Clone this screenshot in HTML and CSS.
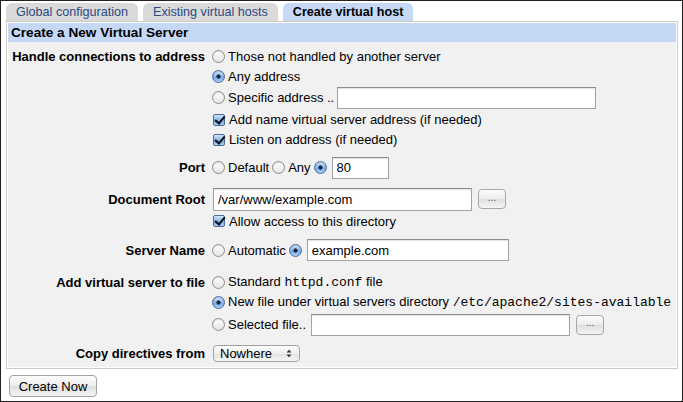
FILE: index.html
```html
<!DOCTYPE html>
<html>
<head>
<meta charset="utf-8">
<link rel="stylesheet" href="styles.css">
</head>
<body>
<div class="frame">
  <div class="tabs">
    <div class="tab">Global configuration</div>
    <div class="tab">Existing virtual hosts</div>
    <div class="tab active">Create virtual host</div>
  </div>
  <div class="panel">
    <div class="panel-head">Create a New Virtual Server</div>
    <div class="panel-body">
      <div class="group g-handle">
        <div class="label h19">Handle connections to address</div>
        <div class="fields">
          <div class="line h19"><input type="radio" class="rd" name="addr"><span>Those not handled by another server</span></div>
          <div class="line h20"><input type="radio" class="rd" name="addr" checked><span>Any address</span></div>
          <div class="line h23"><input type="radio" class="rd" name="addr"><span>Specific address ..</span><input type="text" class="txt w-spec"></div>
          <div class="line h21"><input type="checkbox" class="cb" checked><span>Add name virtual server address (if needed)</span></div>
          <div class="line h19"><input type="checkbox" class="cb" checked><span>Listen on address (if needed)</span></div>
        </div>
      </div>
      <div class="group g-port">
        <div class="label h23">Port</div>
        <div class="fields">
          <div class="line h23"><input type="radio" class="rd" name="port"><span>Default</span><input type="radio" class="rd" name="port"><span>Any</span><input type="radio" class="rd" name="port" checked><input type="text" class="txt w-port" value="80"></div>
        </div>
      </div>
      <div class="group g-root">
        <div class="label h24">Document Root</div>
        <div class="fields">
          <div class="line h24"><input type="text" class="txt w-root first" value="/var/www/example.com"><button class="dots">...</button></div>
          <div class="line h20"><input type="checkbox" class="cb" checked><span>Allow access to this directory</span></div>
        </div>
      </div>
      <div class="group g-name">
        <div class="label h22">Server Name</div>
        <div class="fields">
          <div class="line h22"><input type="radio" class="rd" name="sn"><span>Automatic</span><input type="radio" class="rd" name="sn" checked><input type="text" class="txt w-name" value="example.com"></div>
        </div>
      </div>
      <div class="group g-file">
        <div class="label h20">Add virtual server to file</div>
        <div class="fields">
          <div class="line h20"><input type="radio" class="rd" name="f"><span>Standard <code>httpd.conf</code> file</span></div>
          <div class="line h20"><input type="radio" class="rd" name="f" checked><span>New file under virtual servers directory <code>/etc/apache2/sites-available</code></span></div>
          <div class="line h25"><input type="radio" class="rd" name="f"><span>Selected file..</span><input type="text" class="txt w-sel"><button class="dots">...</button></div>
        </div>
      </div>
      <div class="group g-copy">
        <div class="label h20">Copy directives from</div>
        <div class="fields">
          <div class="line h20">
            <div class="select"><span>Nowhere</span>
              <svg class="arr" width="6" height="9" viewBox="0 0 6 9"><path d="M0.5 3.5 L3 0.8 L5.5 3.5 Z M0.5 5.5 L3 8.2 L5.5 5.5 Z" fill="#333"/></svg>
            </div>
          </div>
        </div>
      </div>
    </div>
  </div>
  <div class="actions"><button class="btn">Create Now</button></div>
</div>
</body>
</html>
```

FILE: styles.css
```css
* { box-sizing: border-box; }
html, body { margin: 0; padding: 0; background: #fff; }
body { font-family: "Liberation Sans", Arial, sans-serif; font-size: 13px; color: #000; }

.frame {
  width: 683px;
  height: 402px;
  border: 1px solid #231f20;
  background: #fff;
  overflow: hidden;
}

.tabs {
  display: flex;
  gap: 5px;
  padding: 2px 0 0 5px;
  height: 20px;
}
.tab {
  height: 18px;
  padding: 0 10px 0 10px;
  line-height: 18px;
  font-size: 12.6px;
  color: #2b4a82;
  background: #dadada;
  border-radius: 6px 6px 0 0;
  white-space: nowrap;
}
.tab.active {
  background: #c5d9f7;
  color: #000;
  font-weight: bold;
  padding: 0 10px 0 10px;
}

.panel {
  margin: 0 4px 0 5px;
  border: 1px solid #cfcbc4;
  padding: 1px;
  background: #fff;
}
.panel-head {
  height: 19px;
  line-height: 20px;
  background: #c5d9f7;
  font-weight: bold;
  font-size: 13.6px;
  padding-left: 3px;
}
.panel-body {
  background: #f1f1f1;
  padding: 5px 0 4px 0;
}

.group { display: flex; }
.g-port { margin-top: 7px; }
.g-root { margin-top: 8px; }
.g-name { margin-top: 8px; }
.g-file { margin-top: 11px; }
.g-copy { margin-top: 6px; }

.label {
  flex: none;
  width: 197px;
  display: flex;
  align-items: center;
  justify-content: flex-end;
  font-weight: bold;
  white-space: nowrap;
}
.fields { margin-left: 5px; }
.line { display: flex; align-items: center; white-space: nowrap; }
.h19 { height: 19px; }
.h20 { height: 20px; }
.h21 { height: 21px; }
.h22 { height: 22px; }
.h23 { height: 23px; }
.h24 { height: 24px; }
.h25 { height: 25px; }

code {
  font-family: "Liberation Mono", "Courier New", monospace;
  font-size: 13px;
}

.rd {
  -webkit-appearance: none;
  appearance: none;
  width: 13px;
  height: 13px;
  margin: 0 3px 0 3px;
  border: 1px solid #8d8d8d;
  border-radius: 50%;
  background: linear-gradient(#ffffff, #e4e4e4);
  box-shadow: inset 0 1px 1px rgba(0,0,0,0.12);
  flex: none;
}
.line > .rd:first-child { margin-left: 2px; }
.rd:checked {
  border-color: #4a6c9b;
  background:
    radial-gradient(circle at 50% 50%, #17253c 0 1.8px, transparent 2.4px),
    linear-gradient(#d3e6fb, #78ace8 60%, #a9d0f6);
}

.cb {
  -webkit-appearance: none;
  appearance: none;
  position: relative;
  width: 12px;
  height: 12px;
  margin: 0 4px 0 3px;
  border: 1px solid #4a6c9b;
  border-radius: 2px;
  background: linear-gradient(#d3e6fb, #78ace8 60%, #a9d0f6);
  flex: none;
}
.cb:checked::after {
  content: "";
  position: absolute;
  left: 3px;
  top: -1px;
  width: 4px;
  height: 8px;
  border-right: 2px solid #111;
  border-bottom: 2px solid #111;
  transform: rotate(40deg);
}

.txt {
  height: 22px;
  border: 1px solid #a3a3a3;
  border-top-color: #8c8c8c;
  box-shadow: inset 0 1px 1px rgba(0,0,0,0.12);
  background: #fff;
  font-family: "Liberation Sans", Arial, sans-serif;
  font-size: 13px;
  padding: 0 4px;
  margin: 0 0 0 3px;
  color: #000;
  outline: none;
}
.w-spec { width: 259px; }
.w-port { width: 57px; margin-left: 2px; height: 22px; }
.w-root { width: 259px; height: 23px; }
.w-name { width: 202px; margin-left: 2px; height: 22px; }
.w-sel { width: 259px; margin-left: 5px; height: 22px; }

.dots {
  width: 28px;
  height: 20px;
  margin-left: 6px;
  padding: 0 0 3px 0;
  border: 1px solid #a8a8a8;
  border-radius: 4px;
  background: linear-gradient(#fdfdfd, #ececec 50%, #dedede 51%, #f4f4f4);
  font-family: "Liberation Sans", Arial, sans-serif;
  font-size: 10px;
  color: #3a5a88;
  line-height: 14px;
}

.select {
  display: flex;
  align-items: center;
  justify-content: space-between;
  width: 87px;
  height: 17px;
  margin-left: 3px;
  padding: 0 7px 0 6px;
  border: 1px solid #a0a0a0;
  border-radius: 4px;
  background: linear-gradient(#fdfdfd, #eeeeee 50%, #e2e2e2 51%, #f6f6f6);
}

.actions { padding: 6px 0 0 8px; }
.btn {
  width: 88px;
  height: 22px;
  border: 1px solid #a3a3a3;
  border-radius: 4px;
  background: linear-gradient(#fdfdfd, #ededed 50%, #dfdfdf 51%, #f5f5f5);
  font-family: "Liberation Sans", Arial, sans-serif;
  font-size: 13px;
  color: #000;
  padding: 0;
}
```
